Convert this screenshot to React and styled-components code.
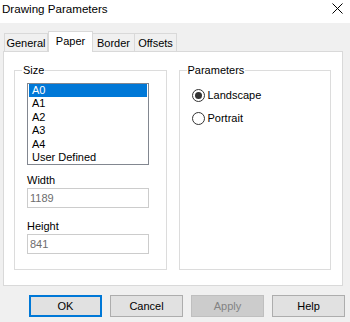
import React, { useState } from "react";
import styled, { createGlobalStyle, css } from "styled-components";

const GlobalStyle = createGlobalStyle`
  html, body {
    margin: 0;
    padding: 0;
    background: #f0f0f0;
  }
  body {
    font-family: "Liberation Sans", Arial, sans-serif;
    font-size: 11px;
    color: #000;
  }
`;

const Window = styled.div`
  width: 350px;
  height: 322px;
  display: flex;
  flex-direction: column;
  background: #f0f0f0;
  overflow: hidden;
`;

const TitleBar = styled.div`
  height: 23px;
  background: #fff;
  display: flex;
  align-items: center;
  justify-content: space-between;
  padding: 0 7px 0 2px;
  box-sizing: border-box;
`;

const Title = styled.span`
  font-size: 11.6px;
  line-height: 23px;
  padding-bottom: 6px;
`;

const CloseButton = styled.div`
  width: 11px;
  height: 11px;
  margin-bottom: 6px;
  display: flex;
`;

const TabStrip = styled.div`
  display: flex;
  align-items: flex-end;
  height: 20px;
  margin: 8px 0 0 4px;
  position: relative;
  z-index: 1;
`;

const Tab = styled.div`
  box-sizing: border-box;
  width: ${(p) => p.$w}px;
  height: 18px;
  border: 1px solid #d9d9d9;
  border-bottom: none;
  border-left: ${(p) => (p.$first ? "1px solid #d9d9d9" : "none")};
  background: #f0f0f0;
  display: flex;
  align-items: center;
  justify-content: center;
  padding-top: 1px;
  ${(p) =>
    p.$active &&
    css`
      height: 21px;
      margin-bottom: -1px;
      background: #fff;
      border-left: 1px solid #d9d9d9;
      padding-bottom: 3px;
    `}
`;

const Panel = styled.div`
  box-sizing: border-box;
  height: 235px;
  margin: 0 7px 0 3px;
  background: #fff;
  border: 1px solid #d9d9d9;
  display: flex;
  gap: 12px;
  padding: 18px 11px 15px 10px;
`;

const GroupBox = styled.div`
  position: relative;
  box-sizing: border-box;
  width: 153px;
  border: 1px solid #dcdcdc;
  padding: 12px 0 0 12px;
  display: flex;
  flex-direction: column;
`;

const GroupLabel = styled.span`
  position: absolute;
  top: -8px;
  left: 7px;
  padding: 0 1px;
  background: #fff;
  line-height: 14px;
`;

const ListBox = styled.div`
  box-sizing: border-box;
  width: 122px;
  height: 82px;
  border: 1px solid #828790;
  padding: 0 1px;
`;

const ListItem = styled.div`
  height: 13.4px;
  line-height: 13.4px;
  padding-left: 3px;
  background: ${(p) => (p.$selected ? "#0078d7" : "transparent")};
  color: ${(p) => (p.$selected ? "#fff" : "#000")};
  white-space: nowrap;
`;

const FieldLabel = styled.div`
  line-height: 13px;
  margin-top: ${(p) => p.$top}px;
  color: #000;
`;

const TextBox = styled.div`
  box-sizing: border-box;
  width: 122px;
  height: 20px;
  margin-top: 1px;
  border: 1px solid #cccccc;
  color: #6d6d6d;
  padding-left: 2px;
  line-height: 18px;
`;

const RadioRow = styled.div`
  display: flex;
  align-items: center;
  gap: 3px;
  height: 14px;
  margin-top: ${(p) => p.$top}px;
`;

const RadioCircle = styled.span`
  box-sizing: border-box;
  width: 13px;
  height: 13px;
  border-radius: 50%;
  border: 1px solid #333;
  background: #fff;
  display: flex;
  align-items: center;
  justify-content: center;
  &::after {
    content: "";
    width: 7px;
    height: 7px;
    border-radius: 50%;
    background: ${(p) => (p.$checked ? "#333" : "transparent")};
  }
`;

const ButtonRow = styled.div`
  display: flex;
  justify-content: flex-end;
  gap: 8px;
  margin-top: 9px;
  padding-right: 5px;
`;

const Button = styled.div`
  box-sizing: border-box;
  width: 73px;
  height: 22px;
  display: flex;
  align-items: center;
  justify-content: center;
  background: #e1e1e1;
  border: 1px solid #adadad;
  color: #000;
  ${(p) =>
    p.$default &&
    css`
      border: 2px solid #0078d7;
    `}
  ${(p) =>
    p.$disabled &&
    css`
      background: #cccccc;
      border-color: #bfbfbf;
      color: #838383;
    `}
`;

const sizes = ["A0", "A1", "A2", "A3", "A4", "User Defined"];
const tabs = [
  { label: "General", w: 44 },
  { label: "Paper", w: 45 },
  { label: "Border", w: 42 },
  { label: "Offsets", w: 42 },
];

export default function App() {
  const [tab, setTab] = useState("Paper");
  const [size, setSize] = useState("A0");
  const [orient, setOrient] = useState("Landscape");

  return (
    <Window>
      <GlobalStyle />
      <TitleBar>
        <Title>Drawing Parameters</Title>
        <CloseButton>
          <svg width="11" height="11" viewBox="0 0 11 11">
            <path d="M0.5 0.5 L10.5 10.5 M10.5 0.5 L0.5 10.5" stroke="#000" strokeWidth="1" />
          </svg>
        </CloseButton>
      </TitleBar>

      <TabStrip>
        {tabs.map((t, i) => (
          <Tab
            key={t.label}
            $w={t.w}
            $first={i === 0}
            $active={tab === t.label}
            onClick={() => setTab(t.label)}
          >
            {t.label}
          </Tab>
        ))}
      </TabStrip>

      <Panel>
        <GroupBox>
          <GroupLabel>Size</GroupLabel>
          <ListBox>
            {sizes.map((s) => (
              <ListItem key={s} $selected={size === s} onClick={() => setSize(s)}>
                {s}
              </ListItem>
            ))}
          </ListBox>
          <FieldLabel $top={9}>Width</FieldLabel>
          <TextBox>1189</TextBox>
          <FieldLabel $top={12}>Height</FieldLabel>
          <TextBox>841</TextBox>
        </GroupBox>

        <GroupBox>
          <GroupLabel>Parameters</GroupLabel>
          {["Landscape", "Portrait"].map((o, i) => (
            <RadioRow key={o} $top={i === 0 ? 5 : 9} onClick={() => setOrient(o)}>
              <RadioCircle $checked={orient === o} />
              {o}
            </RadioRow>
          ))}
        </GroupBox>
      </Panel>

      <ButtonRow>
        <Button $default>OK</Button>
        <Button>Cancel</Button>
        <Button $disabled>Apply</Button>
        <Button>Help</Button>
      </ButtonRow>
    </Window>
  );
}
